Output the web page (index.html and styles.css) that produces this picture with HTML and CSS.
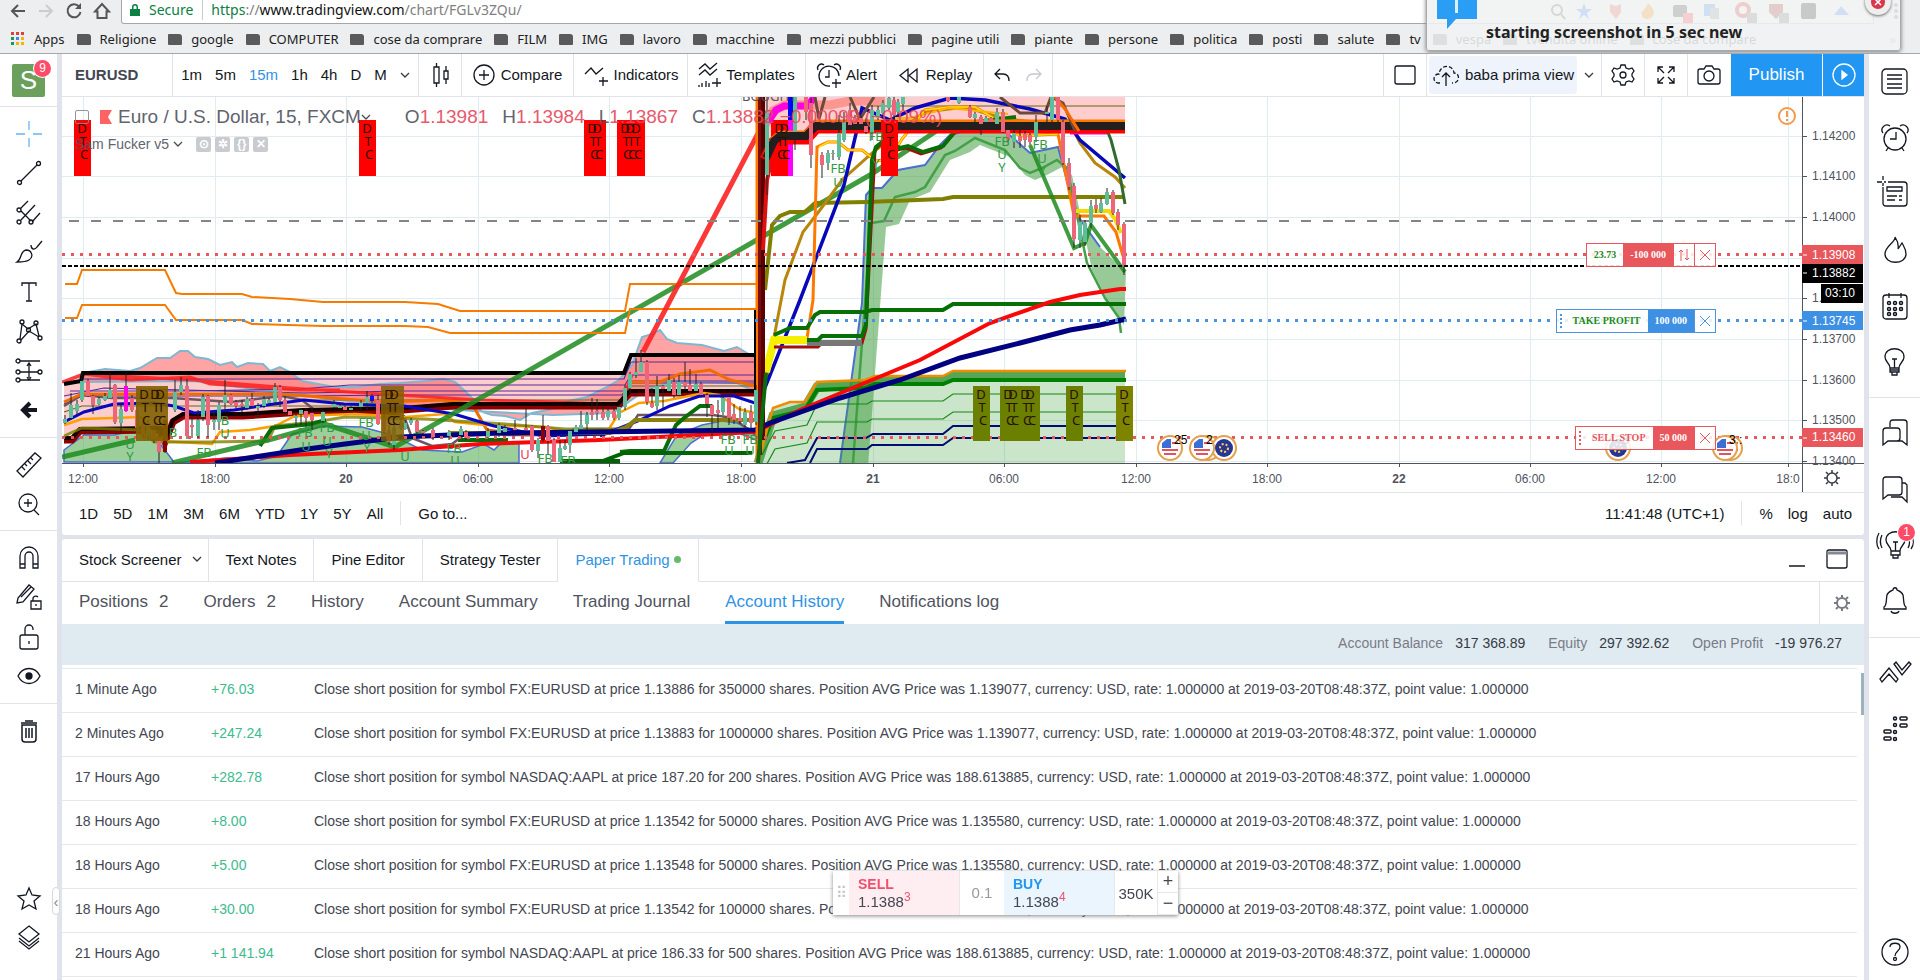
FILE: index.html
```html
<!DOCTYPE html>
<html lang="en">

<head>
    <meta charset="UTF-8" />
    <meta name="viewport" content="width=device-width, initial-scale=1.0" />
    <title>EURUSD 1.13882</title>
    <link rel="stylesheet" href="styles.css">
</head>

<body>
    <header class="browser">
        <div class="address-row">
            <button class="nav-btn" aria-label="Back"><svg width="18" height="18" viewBox="0 0 18 18"><path d="M16 9H3M9 3L3 9l6 6" stroke="#555" stroke-width="2" fill="none" /></svg></button>
            <button class="nav-btn" aria-label="Forward"><svg width="18" height="18" viewBox="0 0 18 18"><path d="M2 9h13M9 3l6 6-6 6" stroke="#ccc" stroke-width="2" fill="none" /></svg></button>
            <button class="nav-btn" aria-label="Reload"><svg width="18" height="18" viewBox="0 0 18 18"><path d="M14 4.500A6.500 6.500 0 1 0 15.500 10" stroke="#555" stroke-width="2" fill="none" /><path d="M16 1v6h-6z" fill="#555" /></svg></button>
            <button class="nav-btn" aria-label="Home"><svg width="18" height="18" viewBox="0 0 18 18"><path d="M9 2L2 9.500h2.500V16h9V9.500H16z" stroke="#555" stroke-width="2" fill="none" /></svg></button>
            <div class="address">
                <svg width="10" height="14" viewBox="0 0 10 14"><path d="M0 6h10v7H0zM2 6V4a3 3 0 0 1 6 0v2" fill="#0b8043" /><path d="M3.500 6V4a1.500 1.500 0 0 1 3 0v2z" fill="#fff" /></svg>
                <span class="secure">Secure</span>
                <span class="url"><span class="secure">https</span>://<b>www.tradingview.com</b>/chart/FGLv3ZQu/</span>
            </div>
            <div class="browser-dots"><i></i><i></i><i></i></div>
        </div>
        <nav class="bookmarks">
            <a href="#"><svg width="14" height="14" viewBox="0 0 14 14"><path d="M0 0h3v3H0zM5 0h3v3H5zM10 0h3v3h-3z" fill="#db4437" /><path d="M0 5h3v3H0z" fill="#0f9d58" /><path d="M5 5h3v3H5z" fill="#4285f4" /><path d="M10 5h3v3h-3zM5 10h3v3H5zM10 10h3v3h-3z" fill="#f4b400" /><path d="M0 10h3v3H0z" fill="#0f9d58" /></svg>Apps</a>
            <a href="#" class="folder">Religione</a>
            <a href="#" class="folder">google</a>
            <a href="#" class="folder">COMPUTER</a>
            <a href="#" class="folder">cose da comprare</a>
            <a href="#" class="folder">FILM</a>
            <a href="#" class="folder">IMG</a>
            <a href="#" class="folder">lavoro</a>
            <a href="#" class="folder">macchine</a>
            <a href="#" class="folder">mezzi pubblici</a>
            <a href="#" class="folder">pagine utili</a>
            <a href="#" class="folder">piante</a>
            <a href="#" class="folder">persone</a>
            <a href="#" class="folder">politica</a>
            <a href="#" class="folder">posti</a>
            <a href="#" class="folder">salute</a>
            <a href="#" class="folder">tv</a>
            <a href="#" class="folder">vespa</a>
            <a href="#" class="folder">tvendita online</a>
            <a href="#" class="folder">cose da compare</a>
            <span class="more">»</span>
        </nav>
        <div class="toast">
            <svg class="toast-icon" width="40" height="32" viewBox="0 0 40 32"><path d="M0 0h40v22H19l-9 10V22H0z" fill="#2a9df4" /><path d="M18 0h3v16h-3z" fill="#d8efff" /></svg>
            <strong>starting screenshot in 5 sec new</strong>
            <svg class="toast-ghosts" width="310" height="28" viewBox="0 0 310 28">
                <g opacity=".18">
                    <circle cx="10" cy="10" r="5" fill="none" stroke="#555" stroke-width="2" /><path d="M14 14l4 5" stroke="#555" stroke-width="2" />
                    <path d="M37 3l2 6h6l-5 4 2 6-5-4-5 4 2-6-5-4h6z" fill="#4285f4" />
                    <path d="M63 4l6 2 5-2v8l-5 7-6-7z" fill="#e55" />
                    <path d="M101 3c6 6 7 9 5 13-3 4-9 4-11 0-2-5 4-6 6-13z" fill="#f80" />
                    <rect x="126" y="5" width="14" height="12" rx="2" fill="#333" /><rect x="136" y="13" width="10" height="10" fill="#f33" />
                    <rect x="157" y="4" width="11" height="12" fill="#4285f4" /><rect x="163" y="8" width="9" height="11" fill="#999" />
                    <circle cx="196" cy="10" r="6" fill="none" stroke="#d22" stroke-width="4" /><rect x="200" y="13" width="10" height="10" fill="#777" />
                    <path d="M222 4h14v8l-7 7-7-7z" fill="#a22" /><rect x="232" y="13" width="10" height="10" fill="#777" />
                    <rect x="254" y="3" width="15" height="16" rx="2" fill="#111" />
                    <path d="M287 15l7-9 8 9z" fill="#4285f4" />
                </g>
            </svg>
            <button class="toast-close" aria-label="Close"><svg width="14" height="14" viewBox="0 0 14 14"><circle cx="7" cy="7" r="7" fill="#d9364c" /><path d="M4 4l6 6M10 4l-6 6" stroke="#fff" stroke-width="1.500" /></svg></button>
        </div>
    </header>

    <div class="app">
        <aside class="left-bar">
            <div class="avatar-box"><div class="avatar">S<span class="badge">9</span></div></div>
            <div class="tools tools-draw">
                <button aria-label="Cross"><svg class="ic blue" viewBox="0 0 28 28"><path d="M14 1v9M14 18v9M1 14h9M18 14h9" /></svg></button>
                <button aria-label="Trend line"><svg class="ic" viewBox="0 0 28 28"><path d="M6 22L22 6" /><circle cx="4.500" cy="23.500" r="2" /><circle cx="23.500" cy="4.500" r="2" /></svg></button>
                <button aria-label="Pitchfork"><svg class="ic" viewBox="0 0 28 28"><path d="M5 10L13 2M6 21L20 6M17 23l8-9M6 12l10 10" /><circle cx="4" cy="11" r="2" /><circle cx="4" cy="23" r="2" /><circle cx="16" cy="23" r="2" /></svg></button>
                <button aria-label="Brush"><svg class="ic" viewBox="0 0 28 28"><path d="M2 24c5-3 3-11 9-12 6 0 8 7 3 10-3 2-7 2-12 2zM16 7c0 5 4 5 6 2l5-6" /></svg></button>
                <button aria-label="Text"><svg class="ic" viewBox="0 0 28 28"><path d="M7 8V5h14v3M14 5v18M11 23h6" /></svg></button>
                <button aria-label="Patterns"><svg class="ic" viewBox="0 0 28 28"><path d="M5 22L7 7l6 5 8-5 3 12M6 23l8-9 10 6" /><circle cx="7" cy="5" r="2" /><circle cx="21" cy="6" r="2" /><circle cx="13.500" cy="13" r="2" /><circle cx="4" cy="24" r="2" /><circle cx="25" cy="21" r="2" /></svg></button>
                <button aria-label="Forecast"><svg class="ic" viewBox="0 0 28 28"><path d="M5 4h20M5 15h18M5 23h20M14 7v14M12 9l2-3 2 3M12 20l2 3 2-3" /><circle cx="3" cy="4" r="2" /><circle cx="3" cy="15" r="2" /><circle cx="25" cy="15" r="2" /><circle cx="3" cy="23" r="2" /></svg></button>
                <button aria-label="Hide drawings list"><svg class="ic" viewBox="0 0 28 28"><path d="M22 14H9M15 7l-7 7 7 7" stroke-width="4" /></svg></button>
            </div>
            <div class="tools tools-measure">
                <button aria-label="Measure"><svg class="ic" viewBox="0 0 28 28"><path d="M2 20L20 2l6 5L8 26zM7 16l3 3M10 13l2 2M13 10l3 3M16 7l2 2" /></svg></button>
                <button aria-label="Zoom in"><svg class="ic" viewBox="0 0 28 28"><circle cx="13" cy="13" r="9" /><path d="M19 20l5 5M9 13h8M13 9v8" /></svg></button>
            </div>
            <div class="tools tools-lock">
                <button aria-label="Magnet"><svg class="ic" viewBox="0 0 28 28"><path d="M5 24V12a9 9 0 0 1 18 0v12h-5V12a4 4 0 0 0-8 0v12zM5 20h5M18 20h5" /></svg></button>
                <button aria-label="Stay in drawing mode"><svg class="ic" viewBox="0 0 28 28"><path d="M2 20l1-5L14 2l5 4L8 19zM6 14L16 4M16 18h10v8H16zM18 18v-3a3 3 0 0 1 5-1M21 21v2" /></svg></button>
                <button aria-label="Lock drawings"><svg class="ic" viewBox="0 0 28 28"><rect x="5" y="12" width="18" height="14" rx="2" /><path d="M10 12V6a4 4 0 0 1 8 0v1M14 18v3" /></svg></button>
                <button aria-label="Hide drawings"><svg class="ic" viewBox="0 0 28 28"><path d="M3 14c5-10 17-10 22 0-5 10-17 10-22 0z" /><circle cx="14" cy="14" r="3" fill="#131722" /></svg></button>
            </div>
            <div class="tools tools-trash">
                <button aria-label="Remove"><svg class="ic" viewBox="0 0 28 28"><path d="M6 6h16M10 4h8M7 8h14v14c0 2-1 3-3 3h-8c-2 0-3-1-3-3zM11 11v10M14 11v10M17 11v10" stroke-width="1.500" /></svg></button>
            </div>
            <div class="tools tools-bottom">
                <button aria-label="Favourites"><svg class="ic" viewBox="0 0 28 28"><path d="M14 4l3 7 8 1-6 5 2 8-7-4-7 4 2-8-6-5 8-1z" /></svg></button>
                <button aria-label="Object tree"><svg class="ic" viewBox="0 0 28 28"><path d="M14 3l10 8-10 8-10-8zM4 15l10 8 10-8M4 18l10 8 10-8" /></svg></button>
            </div>
            <button class="collapse" aria-label="Collapse">‹</button>
        </aside>

        <main class="center">
            <section class="chart-box">
                <div class="top-bar">
                    <button class="cell symbol">EURUSD</button>
                    <div class="cell intervals">
                        <button>1m</button><button>5m</button><button class="active">15m</button><button>1h</button><button>4h</button><button>D</button><button>M</button>
                        <button aria-label="More intervals"><svg class="chev" viewBox="0 0 10 6"><path d="M1 1l4 4 4-4" /></svg></button>
                    </div>
                    <button class="cell w-icon" aria-label="Candles"><svg class="ic" viewBox="0 0 28 28"><path d="M8 6h5v16H8zM10.500 2v4M10.500 22v4M18 10h4v8h-4zM20 5v5M20 18v5" /></svg></button>
                    <button class="cell w-compare"><svg class="ic" viewBox="0 0 28 28"><circle cx="14" cy="14" r="10" /><path d="M14 9v10M9 14h10" /></svg>Compare</button>
                    <button class="cell w-indicators"><svg class="ic" viewBox="0 0 28 28"><path d="M3 13l6-6 5 6 7-6M21 16v9M17 20h9" /></svg>Indicators</button>
                    <button class="cell w-templates"><svg class="ic" viewBox="0 0 28 28"><path d="M4 8l6-5 5 5 7-6M4 14l6-5 5 5 7-6M4 24v2M7 22v4M11 20v6M14 22v4M22 17v9M17 22h9" /></svg>Templates</button>
                    <button class="cell w-alert"><svg class="ic" viewBox="0 0 28 28"><path d="M15 25A10 10 0 1 1 24 15M14 9v7h-4M3 9a4 4 0 0 1 6-5M19 4a4 4 0 0 1 6 5M21 18v9M17 22h9" /></svg>Alert</button>
                    <button class="cell w-replay"><svg class="ic" viewBox="0 0 28 28"><path d="M13 8v13l-8-6.500zM22 8v13l-8-6.500z" /></svg>Replay</button>
                    <div class="cell w-undo">
                        <button aria-label="Undo"><svg class="ic" viewBox="0 0 28 28"><path d="M11 8l-5 5 5 5M6 13h8c4 0 6 2 6 7" /></svg></button>
                        <button aria-label="Redo"><svg class="ic muted" viewBox="0 0 28 28"><path d="M17 8l5 5-5 5M22 13h-8c-4 0-6 2-6 7" /></svg></button>
                    </div>
                    <div class="cell spacer"></div>
                    <button class="cell w-icon" aria-label="Select layout"><svg class="ic" viewBox="0 0 28 28"><rect x="4" y="5" width="20" height="18" rx="2" /></svg></button>
                    <div class="cell w-view">
                        <button class="view-name"><svg class="ic" viewBox="0 0 28 28"><path d="M8 22H6c-6-1-5-9 1-9 1-10 14-10 15-1 6 0 6 9 0 10h-2" stroke-dasharray="4 2" /><path d="M14 25V12M10 16l4-4 4 4" /></svg>baba prima view</button>
                        <button class="view-more" aria-label="Layouts"><svg class="chev" viewBox="0 0 10 6"><path d="M1 1l4 4 4-4" /></svg></button>
                    </div>
                    <button class="cell w-icon" aria-label="Settings"><svg class="ic" viewBox="0 0 28 28"><circle cx="14" cy="14" r="3" /><path d="M12 4h4l1 3 3 1 3-1 2 3-2 3v2l2 3-2 3-3-1-3 1-1 3h-4l-1-3-3-1-3 1-2-3 2-3v-2l-2-3 2-3 3 1 3-1z" /></svg></button>
                    <button class="cell w-icon" aria-label="Fullscreen"><svg class="ic" viewBox="0 0 28 28"><path d="M6 11V6h5M6 6l6 6M17 6h5v5M22 6l-6 6M6 17v5h5M6 22l6-6M22 17v5h-5M22 22l-6-6" /></svg></button>
                    <button class="cell w-icon no-line" aria-label="Snapshot"><svg class="ic" viewBox="0 0 28 28"><path d="M5 8h4l2-3h6l2 3h4c1 0 2 1 2 2v11c0 1-1 2-2 2H5c-1 0-2-1-2-2V10c0-1 1-2 2-2z" /><circle cx="14" cy="15" r="5" /></svg></button>
                    <button class="publish">Publish</button>
                    <button class="play" aria-label="Stream"><svg class="ic white" viewBox="0 0 28 28"><circle cx="14" cy="14" r="11" /><path d="M12 10v8l5-4z" fill="#fff" /></svg></button>
                </div>

                <div class="chart">
                    <div class="legend">
                        <div class="legend-main">
                            <span class="fold"></span>
                            <svg width="12" height="14" viewBox="0 0 12 14"><path d="M0 0h12l-4 7 4 7H0z" fill="#ff5252" /></svg>
                            <span class="legend-name">Euro / U.S. Dollar, 15, FXCM</span>
                            <svg class="chev" viewBox="0 0 10 6"><path d="M1 1l4 4 4-4" /></svg>
                            <span class="ohlc">O<em>1.13981</em></span>
                            <span class="ohlc">H<em>1.13984</em></span>
                            <span class="ohlc">L<em>1.13867</em></span>
                            <span class="ohlc">C<em>1.13882 −0.00099 (−0.09%)</em></span>
                        </div>
                        <div class="legend-study">
                            <span>Sam Fucker v5</span>
                            <svg class="chev" viewBox="0 0 10 6"><path d="M1 1l4 4 4-4" /></svg>
                            <button aria-label="Hide">⊙</button><button aria-label="Format">✲</button><button aria-label="Source">{}</button><button aria-label="Delete">✕</button>
                        </div>
                    </div>
                    <svg class="plot" viewBox="62 97 1802 395" preserveAspectRatio="xMinYMin slice">
                        <defs><clipPath id="area"><rect x="62" y="97" width="1740" height="366" /></clipPath></defs>
                        <g id="grid" stroke="#e1ecf2"></g>
                        <g clip-path="url(#area)" fill="none">
                            <!-- left bands -->
                            <path d="M64 384L83 373H624L631 355H756V393H629L618 407H450L400 413 345 413 300 415H180L168 427H80L64 440z" fill="#fccdcd" />
                            <path d="M83 373l22-4 25 2 10-3 17-10h13l10-7h8l7 6 13 2 12 6 12-3 5 5 11-4 15 1 7 7 10-4 10 5 12 9 16 3 17 3h20l25-3 20-1 25-2 18-2 12 3 10 9 10 10 7 11 10 3 13 1 15 4 12-7 20-4 12-7 23-5 20-10 12-7 13-15 10-28 10-3 8-4 7 9 10 4 25 2 22 6 13-4 10 6 10 6v34l-20-10-60-2-30 8-34 24-60 2-80-4-125-10-155-20-112 1z" fill="rgba(255,90,90,.55)" stroke="#7fb7d3" stroke-width="2" />
                            <path d="M64 450l20-15 30 0 20-4 20 5 20 26H64zM172 463l55-5 30 3 20-5 15-22 30-8 40 1 30 8 30 15 40 2 22-8 10 6 8-8 17 1v20z" fill="rgba(60,160,60,.5)" stroke="#4a6fd0" stroke-width="1.500" />
                            <path d="M660 463l17-28 25-10 20-4 15 2 19 9v8l-25-10-20 0-20 13-18 20z" fill="rgba(60,160,60,.5)" stroke="#4a6fd0" stroke-width="1.500" />
                            <g stroke="#5a2a9a" stroke-width="1.200">
                                <path d="M83 379H624L631 362H756" /><path d="M70 391h120l110-2 50-4h275l6-10h124" /><path d="M64 396l40-8 200 5 96-2h225l6-10h124" /><path d="M64 404l18-8h220l100-1h220l10-12h124" /><path d="M64 412l18-6h540" stroke="#5c6b20" />
                                <path d="M300 400h320l10-14h124" stroke="#5c6b20" />
                            </g>
                            <path d="M64 406l18-11 30 3 60 0 60 4 50-6 20 4 15 12 40 2 35 0 12 2 8 22 20 8 20-2 16-12 40 3 60 0 6-6h55l9-14h75l20 3 24 18" stroke="#6d5560" stroke-width="2.500" />
                            <path d="M64 402l18-8h200l100 8 60-2 30 4 15 26 40 5 40-2 38 2M630 382h30l20-8 30-4 20 10 26 6" stroke="#ef6c00" stroke-width="3" />
                            <path d="M62 382l21-8 110 6 97 8 60 4 130 8 80 2 60 3 12-30M64 382l20-8 46 6 60-3 20 7 30 2 60 4 40 0" stroke="#fd2020" stroke-width="3" stroke-opacity=".85" />
                            <path d="M64 384l17-3 2-8H624l7-18H756" stroke="#000" stroke-width="4" />
                            <path d="M64 440h8l8-9 80-1 5 12 8-20 10-6h60l60-4 100-2 50-4H618l12-13H756" stroke="#8b0000" stroke-width="7" />
                            <path d="M64 438h8l8-9 80-1 5 12 8-20 10-6h60l60-4 100-2 50-4H618l12-13H756" stroke="#150000" stroke-width="4" />
                            <path d="M64 425l18-6 60-2 10 16 10 8 50 3 8-12 30-2 25-4 20-10 60-2 50 3 40-3 10 8 30 3 60 2 30 6h20l14-4 10-16 20-10 25-2 40-8 15 2 20 14 15 4" stroke="#ffa000" stroke-width="2.500" />
                            <path d="M64 436l18-8 60 2 12 12h54l60-1 7-15 40-4 30-5 80 2 80 5 60 5h60l10-10" stroke="#808000" stroke-width="3" opacity=".8" />
                            <path d="M64 422l20-10 30-8 40-1 20 3 20 7 40-3 40-6 30-4 40 4 60 2 50 8 40 12 50 10 60-2 M600 436l40-16 30-14 30-10 34 0 24 8" stroke="#0808c0" stroke-width="3" />
                            <path d="M450 433h160l16-6 10-7h120" stroke="#8a8010" stroke-width="4" />
                            <path d="M260 446l12-18 40-4 14-4M620 452l10-1H664l12-26 8-7 16-12h12M458 440h50" stroke="#0a6b0a" stroke-width="4" />
                            <path d="M62 457L135 440M172 463l100-24 53-15 70 23L755 241l115-66 80-53" stroke="#1f8b1f" stroke-width="5" stroke-opacity=".85" />
                            <path d="M600 462l24-9H752M560 461h60" stroke="#006400" stroke-width="4" />
                            <path d="M65 284h12l5-14h83l11 23 6 1h60l10 3 38 2 33 3h82l33 2 22 7H625l5-27H757M65 318h12l5-13h83l11 15h66l10 4 71 2h82l23 1 22 6H625l5-24H757" stroke="#f57c00" stroke-width="2" />
                            <path d="M643 352L763 124" stroke="#fb2222" stroke-width="5" stroke-opacity=".9" />

                            <!-- top right bands -->
                            <path d="M757 97h368v28H815l-12 12h-25l-8 20-13 40z" fill="#ffcdcd" />
                            <path d="M868 106h257" stroke="#5c6b20" />
                            <path d="M840 463l22-160 4-108 6-7h10l16-18 27-5 15-20 10-10 15-4h40l25 22 28-6 14 53 5 15 23 32 26 25-2 53-14-20-18-35-20-95-10-8-15 8-12 5-10-5-15-18-30-12-10 7-20 8-20 32-20 8-11 24-13 3-18 240z" fill="rgba(50,150,50,.5)" />
                            <path d="M840 463l22-160 4-108 6-7h10l16-18 27-5 15-20 10-10 15-4h40l25 22 28-6 14 53 5 15 23 32" stroke="#4a6fd0" stroke-width="2" />
                            <path d="M853 463l18-240 13-2 11-24 20-5 10-5 20-32 10-4 20-13 30 12 15 18 10 5 12-5 15-8 10 8 20 95 18 35 14 20 2 15" stroke="#43a047" stroke-width="2.500" />
                            <path d="M765 290l7-65 8-9 10-4h15l10-9 52-1 76-3 10-2h172" stroke="#808000" stroke-width="4" />
                            <path d="M762 400l23-120 18-48 17-22 22-30 28-25 30-25 25-18 40-5 40 12 60 6 5-2 10 20 15 20 20 14 10 11" stroke="#b8860b" stroke-width="3" />
                            <path d="M764 390l36-90 44-115 18-77 28 12 25-12 35-10 35 2 45 9 35 10 15 21 45 38" stroke="#0808b8" stroke-width="3.500" />
                            <path d="M1107 130l4 10 8 30 6 34" stroke="#2f6b2f" stroke-width="3" />
                            <path d="M1030 145l44 103 11-5 6-18 34 47" stroke="#1f8b1f" stroke-width="4" stroke-opacity=".85" />
                            <path d="M758 440l7-60 8-42h34L813 300 817 147 828 142 838 142 848 150 862 150 876 161 890 159 902 139 925 110 950 107 975 107 1000 122 1020 136 1058 134 1074 216H1104L1116 232 1123 256" stroke="#ff7800" stroke-width="3" />
                            <path d="M819 147L828 142 838 142 848 150 862 150 876 161 890 159 902 139 925 110 950 107 975 107 1000 122 1020 136 1058 134" stroke="#ffe600" stroke-width="1.500" />
                            <path d="M766 372l8-32h33" stroke="#f5f000" stroke-width="8" /><path d="M1075 211h34l6 8 6 14" stroke="#f5d800" stroke-width="4" />
                            <path d="M774 347h44l4-4h40l4-14 9-179 8-8 15 8 8-2 15 6 20-6 20-22 60-2" stroke="#a01010" stroke-width="3" />
                            <path d="M807 343h55" stroke="#777" stroke-width="6" />
                            <path d="M774 335l16-7h17l8-13 5-3h45l7-2h71l10-6h173M807 340h11l4-4h40l4-11 6-165 4-13 9-7 15 8 8-2 15 6 20-6 18-22 55-7" stroke="#067006" stroke-width="4" />

                            <!-- lower right bands -->
                            <path d="M758 463l15-55 17-6h15l12-20 48-2 10-4h68l10-5h172v92z" fill="rgba(60,160,60,.27)" />
                            <path d="M758 463l15-47 32-9 12-20 48-2 10-4h68l10-5h172" stroke="#379737" stroke-width="9" stroke-opacity=".8" />
                            <path d="M764 440l9-22 32-8 12-20 48-2 10-4h68l10-4h173" stroke="#008000" stroke-width="4" />
                            <path d="M758 463l15-55 17-6h15l12-20 48-2 10-4h68l10-5h173" stroke="#f08c00" stroke-width="2.500" />
                            <path d="M762 455l13-24 32-6 10-21h50l5-3h71l10-7h173M762 473l13-24 32-6 10-21h50l5-3h71l10-7h173" stroke="#158a15" stroke-width="1.200" />
                            <path d="M787 463l18-3 12-22h49l7-4h70l10-8h173M810 463l7-14h50l5-4h71l10-7h173" stroke="#000c72" stroke-width="2" />
                            <path d="M190 462l100-7 110-5 80-6 120-4 155-8 45-22 55-23 65-27 70-37 60-21 30-7 40-6h6" stroke="#f80808" stroke-width="4" />
                            <path d="M215 463l85-13 45-6 55-7 100-4 255-3 15-7 70-25 60-18 60-22 60-15 50-13 30-5 26-6" stroke="#000080" stroke-width="5" />

                            <!-- jump -->
                            <path d="M757 463V97" stroke="#ff7a00" stroke-width="3" /><path d="M760 455V97" stroke="#7a0d0d" stroke-width="4" /><path d="M763 440V97" stroke="#5a0000" stroke-width="4" /><path d="M758 463l8-90" stroke="#0a6b0a" stroke-width="4" />
                            <path d="M755 310v80" stroke="#000" stroke-width="2" />
                            <path d="M763 250l4-70 8-35 10-10" stroke="#e01010" stroke-width="4" />
                            <path d="M771 120h17v56h-17z" fill="#f00" /><path d="M765 125l8-14 12-6h45l20-4h35" stroke="#f44336" stroke-width="9" stroke-opacity=".4" /><path d="M768 122l8-12 8-4h24l6-9M1070 131h37" stroke="#ff00e0" stroke-width="7" />
                            <path d="M788 97h5v30h-5z" fill="#00f" /><path d="M788 120h5v56h-5z" fill="#f0f" />
                            <path d="M766 160l8-17 6-5h26l10-11h309" stroke="#f00" stroke-width="13" /><path d="M766 156l8-17 6-5h26l10-11h309" stroke="#ff7800" stroke-width="7" />
                            <path d="M766 158l8-17 6-5h26l10-10h309" stroke="#231f1f" stroke-width="8" />
                            <path d="M815 97l4 22 6-22M850 97l10 22 14-22M1000 97l20 16 25 0 6-16 12 6 12 28" stroke="#6b4a3a" stroke-width="3" /><path d="M1055 97l10 12 14 22" stroke="#ff6a00" stroke-width="3" />
                            <path d="M895 118h15l38-10 60 6" stroke="#ffb300" stroke-width="2" />

                            <!-- levels -->
                            <path d="M69 221H1802" stroke="#858585" stroke-width="2" stroke-dasharray="10 12" />
                            <path d="M62 254.500H1802" stroke="#e8575c" stroke-width="3" stroke-dasharray="3 6" />
                            <path d="M62 266H1802" stroke="#000" stroke-width="2" stroke-dasharray="4 2" />
                            <path d="M62 320.500H1802" stroke="#4a94df" stroke-width="3" stroke-dasharray="3 6" />
                            <path d="M62 437.500H1802" stroke="#e8575c" stroke-width="3" stroke-dasharray="3 6" />
                        </g>
                        <g id="candles" clip-path="url(#area)"></g>
                        <g id="marks" class="marks" clip-path="url(#area)"></g>
                        <g id="events" class="events"></g>
                        <path d="M62 463.500H1864M1802.500 97V492" stroke="#50535e" fill="none" />
                        <g id="axis" class="axis"></g>
                        <g class="tags">
                            <path d="M1802 245h61v19h-61zM1802 428h61v19h-61z" fill="#e8575c" />
                            <path d="M1802 264h61v19h-61zM1821 284h42v19h-42z" fill="#000" />
                            <path d="M1802 311h61v19h-61z" fill="#3d90e4" />
                            <path d="M1803 255h4M1803 273h4M1803 321h4M1803 438h4" stroke="#fff" />
                            <text x="1812" y="259">1.13908</text><text x="1812" y="277">1.13882</text><text x="1825" y="297">03:10</text><text x="1812" y="325">1.13745</text><text x="1812" y="441">1.13460</text>
                        </g>
                        <circle cx="1787" cy="116" r="8" stroke="#f7994b" stroke-width="2" fill="none" /><path d="M1787 111v6M1787 119v2" stroke="#f7994b" stroke-width="2" />
                        <g stroke="#363a45" fill="none" stroke-width="1.500"><circle cx="1832" cy="478" r="5" /><path d="M1832 470v3M1832 483v3M1824 478h3M1837 478h3M1826 472l2 2M1836 482l2 2M1826 484l2-2M1836 474l2-2" /></g>
                    </svg>
                    <div class="order order-position"><span class="green">23.73</span><span class="qty">-100 000</span><button aria-label="Reverse"><svg width="12" height="12" viewBox="0 0 12 12"><path d="M3 12V1M1 3l2-2 2 2M9 0v11M7 9l2 2 2-2" /></svg></button><button aria-label="Close position"><svg width="12" height="12" viewBox="0 0 12 12"><path d="M1 1l10 10M11 1L1 11" /></svg></button></div>
                    <div class="order order-profit"><i></i><span class="green">TAKE PROFIT</span><span class="qty">100 000</span><button aria-label="Cancel take profit"><svg width="12" height="12" viewBox="0 0 12 12"><path d="M1 1l10 10M11 1L1 11" /></svg></button></div>
                    <div class="order order-stop"><i></i><span>SELL STOP</span><span class="qty">50 000</span><button aria-label="Cancel sell stop"><svg width="12" height="12" viewBox="0 0 12 12"><path d="M1 1l10 10M11 1L1 11" /></svg></button></div>
                </div>

                <div class="range-bar">
                    <button>1D</button><button>5D</button><button>1M</button><button>3M</button><button>6M</button><button>YTD</button><button>1Y</button><button>5Y</button><button>All</button>
                    <span class="sep"></span>
                    <button>Go to...</button>
                    <span class="clock">11:41:48 (UTC+1)</span>
                    <span class="sep"></span>
                    <button>%</button><button>log</button><button>auto</button>
                </div>
            </section>

            <section class="panel">
                <div class="tabs">
                    <button class="tab tab-screener">Stock Screener <svg class="chev" viewBox="0 0 10 6"><path d="M1 1l4 4 4-4" /></svg></button>
                    <button class="tab">Text Notes</button>
                    <button class="tab">Pine Editor</button>
                    <button class="tab">Strategy Tester</button>
                    <button class="tab active">Paper Trading<i class="dot"></i></button>
                    <div class="tabs-end">
                        <button aria-label="Minimize"><svg class="ic" viewBox="0 0 28 28"><path d="M6 21h16" stroke-width="1.500" /></svg></button>
                        <button aria-label="Maximize"><svg class="ic" viewBox="0 0 28 28"><rect x="4" y="5" width="20" height="18" rx="2" /><path d="M4 8h20" stroke="#868993" stroke-width="3" /></svg></button>
                    </div>
                </div>
                <div class="subtabs">
                    <a href="#">Positions<span>2</span></a>
                    <a href="#">Orders<span>2</span></a>
                    <a href="#">History</a>
                    <a href="#">Account Summary</a>
                    <a href="#">Trading Journal</a>
                    <a href="#" class="active">Account History</a>
                    <a href="#">Notifications log</a>
                    <button class="subtabs-gear" aria-label="Trading settings"><svg width="18" height="18" viewBox="0 0 18 18"><circle cx="9" cy="9" r="5" fill="none" stroke="#787b86" stroke-width="2" /><path d="M9 1v3M9 14v3M1 9h3M14 9h3M3 3l2 2M13 13l2 2M3 15l2-2M13 5l2-2" stroke="#787b86" stroke-width="2" /></svg></button>
                </div>
                <div class="summary">
                    <span>Account Balance<b>317 368.89</b></span>
                    <span>Equity<b>297 392.62</b></span>
                    <span>Open Profit<b>-19 976.27</b></span>
                </div>
                <div class="history">
                    <table>
                        <tbody>
                            <tr><td>1 Minute Ago</td><td>+76.03</td><td>Close short position for symbol FX:EURUSD at price 1.13886 for 350000 shares. Position AVG Price was 1.139077, currency: USD, rate: 1.000000 at 2019-03-20T08:48:37Z, point value: 1.000000</td></tr>
                            <tr><td>2 Minutes Ago</td><td>+247.24</td><td>Close short position for symbol FX:EURUSD at price 1.13883 for 1000000 shares. Position AVG Price was 1.139077, currency: USD, rate: 1.000000 at 2019-03-20T08:48:37Z, point value: 1.000000</td></tr>
                            <tr><td>17 Hours Ago</td><td>+282.78</td><td>Close short position for symbol NASDAQ:AAPL at price 187.20 for 200 shares. Position AVG Price was 188.613885, currency: USD, rate: 1.000000 at 2019-03-20T08:48:37Z, point value: 1.000000</td></tr>
                            <tr><td>18 Hours Ago</td><td>+8.00</td><td>Close short position for symbol FX:EURUSD at price 1.13542 for 50000 shares. Position AVG Price was 1.135580, currency: USD, rate: 1.000000 at 2019-03-20T08:48:37Z, point value: 1.000000</td></tr>
                            <tr><td>18 Hours Ago</td><td>+5.00</td><td>Close short position for symbol FX:EURUSD at price 1.13548 for 50000 shares. Position AVG Price was 1.135580, currency: USD, rate: 1.000000 at 2019-03-20T08:48:37Z, point value: 1.000000</td></tr>
                            <tr><td>18 Hours Ago</td><td>+30.00</td><td>Close short position for symbol FX:EURUSD at price 1.13542 for 100000 shares. Position AVG Price was 1.135580, currency: USD, rate: 1.000000 at 2019-03-20T08:48:37Z, point value: 1.000000</td></tr>
                            <tr><td>21 Hours Ago</td><td>+1 141.94</td><td>Close short position for symbol NASDAQ:AAPL at price 186.33 for 500 shares. Position AVG Price was 188.613885, currency: USD, rate: 1.000000 at 2019-03-20T08:48:37Z, point value: 1.000000</td></tr>
                        </tbody>
                    </table>
                    <div class="scroll-thumb"></div>
                </div>
            </section>
        </main>

        <aside class="right-bar">
            <div class="widgets">
                <button aria-label="Watchlist"><svg class="ic" viewBox="0 0 28 28"><rect x="1" y="1" width="25" height="25" rx="4" /><path d="M6 7h15M6 11h15M6 16h15M6 20h15" /></svg></button>
                <button aria-label="Alerts"><svg class="ic" viewBox="0 0 28 28"><circle cx="14" cy="15" r="11" /><path d="M15 8v7H9M2 9a5 5 0 0 1 7-7M19 2a5 5 0 0 1 7 7M7 24l-2 3M21 24l2 3" /></svg></button>
                <button aria-label="Data window"><svg class="ic" viewBox="0 0 28 28"><path d="M7 2h16c2 0 3 1 3 3v18c0 2-1 3-3 3H5c-2 0-3-1-3-3V7M6 7h15v4H6zM6 16h10M18 16h3M6 20h8M18 20h3M-4 2h5M3 2h2M2-4v4M2 3v3" /></svg></button>
                <button aria-label="Hotlists"><svg class="ic" viewBox="0 0 28 28"><path d="M14 1c1 5-10 9-10 17 0 11 21 11 21 0 0-5-2-7-4-11l-4 6c1-5-1-9-3-12z" /></svg></button>
                <button aria-label="Calendar"><svg class="ic" viewBox="0 0 28 28"><rect x="2" y="3" width="24" height="24" rx="3" /><path d="M8 1v5M20 1v5" /><g stroke-width="1.500"><circle cx="8" cy="11" r="1.500" /><circle cx="14" cy="11" r="1.500" /><circle cx="20" cy="11" r="1.500" /><circle cx="8" cy="17" r="1.500" /><circle cx="14" cy="17" r="1.500" /><circle cx="20" cy="17" r="1.500" /><circle cx="8" cy="22" r="1.500" /><circle cx="14" cy="22" r="1.500" /></g></svg></button>
                <button aria-label="My ideas"><svg class="ic" viewBox="0 0 28 28"><path d="M9 20c0-5-5-6-5-11 0-11 19-11 19 0 0 5-5 6-5 11zM9 20v4h9v-4M9 22h9M11 24v3h5v-3M11 11h5M13.500 11v9" /></svg></button>
            </div>
            <div class="widgets">
                <button aria-label="Public chats"><svg class="ic" viewBox="0 0 28 28"><path d="M2 12c0-2 1-3 3-3h11c2 0 3 1 3 3v7c0 2-1 3-3 3H7l-5 4zM9 8V4c0-2 1-3 3-3h11c2 0 3 1 3 3v22l-5-4h-6" /></svg></button>
                <button aria-label="Private chats"><svg class="ic" viewBox="0 0 28 28"><path d="M2 5c0-2 1-3 3-3h13c2 0 3 1 3 3v12c0 2-1 3-3 3H7l-5 4zM21 8h3l2 2v17l-5-5H10" /></svg></button>
                <button aria-label="Ideas stream"><svg class="ic" viewBox="0 0 28 28"><path d="M10 20c0-5-5-6-5-11 0-11 19-11 19 0 0 5-5 6-5 11zM10 20v4h9v-4M12 24v3h5v-3M12 11h5M14.500 11v9M1 4c-2 4-2 9 0 13M-2 2c-3 5-3 12 0 16M27 6c2 3 2 8 0 11M30 3c3 5 3 11 0 15" /></svg><span class="badge">1</span></button>
                <button aria-label="Notifications"><svg class="ic" viewBox="0 0 28 28"><path d="M3 20c3-1 2-8 3-12 1-3 4-4 6-5 0-3 4-3 4 0 2 1 5 2 6 5 1 4 0 11 3 12v2H3zM10 24c1 3 7 3 8 0" /></svg></button>
            </div>
            <div class="widgets">
                <button aria-label="Order panel"><svg class="ic" viewBox="0 0 28 28"><path d="M-1 20l9-11 9 11-2 3-7-8-7 8zM13 5l8 11 9-11-2-2-7 8-6-8z" /></svg></button>
                <button aria-label="Depth of market"><svg class="ic" viewBox="0 0 28 28"><g stroke-width="1.500"><rect x="3" y="15" width="7" height="3" rx="1" /><rect x="3" y="22" width="7" height="3" rx="1" /><rect x="19" y="2" width="7" height="3" rx="1" /><rect x="19" y="9" width="7" height="3" rx="1" /><circle cx="14" cy="3.500" r="1.500" /><circle cx="14" cy="10" r="1.500" /><circle cx="14" cy="17" r="1.500" /><circle cx="14" cy="24" r="1.500" /></g></svg></button>
            </div>
            <button class="help" aria-label="Help"><svg class="ic" viewBox="0 0 28 28"><circle cx="14" cy="14" r="13" /><path d="M9 9c0-5 10-5 10 0 0 4-5 4-5 9" /><circle cx="14" cy="21" r="1.500" /></svg></button>
        </aside>
    </div>

    <div class="trade">
        <span class="grip">⠿</span>
        <button class="sell"><b>SELL</b><span>1.1388<sup>3</sup></span></button>
        <span class="spread">0.1</span>
        <button class="buy"><b>BUY</b><span>1.1388<sup>4</sup></span></button>
        <input type="text" value="350K" aria-label="Quantity">
        <div class="steps"><button aria-label="More">+</button><button aria-label="Less">−</button></div>
    </div>

    <script>
        const draw = ( id, html ) => ( document.getElementById( id ).innerHTML = html );

        // time and price scales
        let times = [ [ 83, "12:00" ], [ 215, "18:00" ], [ 346, "20", 1 ], [ 478, "06:00" ], [ 609, "12:00" ], [ 741, "18:00" ], [ 873, "21", 1 ], [ 1004, "06:00" ], [ 1136, "12:00" ], [ 1267, "18:00" ], [ 1399, "22", 1 ], [ 1530, "06:00" ], [ 1661, "12:00" ], [ 1788, "18:0" ] ];
        let prices = [ [ 136, "1.14200" ], [ 176, "1.14100" ], [ 217, "1.14000" ], [ 258, "1.13900" ], [ 298, "1.13800" ], [ 339, "1.13700" ], [ 380, "1.13600" ], [ 420, "1.13500" ], [ 461, "1.13400" ] ];
        draw( "grid", times.map( t => `<path d="M${t[ 0 ]}.5 97V463" />` ).join( "" ) + prices.map( p => `<path d="M62 ${p[ 0 ]}.5H1802" />` ).join( "" ) );
        draw( "axis", times.map( t => `<path d="M${t[ 0 ]}.5 463v4" /><text x="${t[ 0 ]}" y="483" text-anchor="middle" ${t[ 2 ] ? 'class="day"' : ""}>${t[ 1 ]}</text>` ).join( "" )
            + prices.filter( p => p[ 0 ] != 258 ).map( p => `<path d="M1802 ${p[ 0 ]}.5h5" /><text x="1812" y="${p[ 0 ] + 4}">${p[ 1 ]}</text>` ).join( "" ) );

        // x, high, low, body top, body bottom, colour
        let colours = { g: "#5ebd9a", r: "#ee6478", m: "#ff00e0", k: "#8b0000", b: "#1010ff" };
        let candles = `65 415 424 419 423 g,71 393 420 405 418 g,77 400 415 404 411 g,82 372 402 381 400 g,88 379 397 381 396 r,93 395 414 396 405 r,99 397 405 399 404 g,105 393 401 396 400 g,110 373 398 390 398 g,115 384 424 385 422 r,121 403 433 409 423 g,126 373 412 386 411 m,132 395 412 398 410 r,137 404 430 410 428 r,143 420 437 424 435 r,148 420 440 425 436 g,154 425 443 430 439 r,159 435 463 438 452 r,165 417 453 420 452 k,175 380 412 392 410 g,181 377 395 385 392 g,187 379 439 386 436 r,192 415 438 425 427 r,198 410 438 420 436 g,203 394 421 397 417 g,208 395 437 396 425 r,214 412 430 420 422 g,219 402 430 405 422 g,225 380 412 395 403 g,231 394 405 395 404 r,236 400 408 402 406 r,242 400 412 404 406 r,247 397 410 399 408 g,252 393 408 399 406 r,258 403 417 406 408 g,264 396 408 399 406 g,269 398 404 400 403 g,275 383 405 387 402 g,280 385 407 387 400 r,285 396 415 400 412 r,290 410 416 411 415 r,296 413 426 416 418 g,301 408 425 410 414 g,306 408 427 411 418 r,312 408 430 413 420 r,323 410 423 412 421 g,334 400 408 404 407 g,340 404 410 406 408 g,345 405 412 407 410 r,351 406 412 408 410 g,361 400 412 403 407 g,367 391 410 397 403 g,372 394 403 396 401 b,378 395 425 400 424 r,384 410 433 418 431 r,389 425 445 430 442 r,394 422 450 428 445 g,401 418 430 422 428 g,405 420 430 423 429 g,411 418 425 420 423 g,417 420 435 421 432 r,423 430 434 431 433 r,433 428 440 430 437 r,449 430 440 432 436 g,461 426 437 429 435 g,466 430 440 432 438 r,488 428 438 431 437 g,499 423 437 425 433 g,505 425 433 428 432 g,515 420 432 428 430 r,526 408 430 428 430 r,532 425 452 426 450 r,538 438 458 440 451 g,543 415 442 426 440 k,548 425 455 426 441 r,554 438 462 440 462 r,560 440 462 448 462 g,565 440 450 446 449 g,570 430 453 431 445 g,576 425 433 427 432 g,581 411 430 425 429 g,587 412 430 415 424 g,592 398 420 412 415 r,597 399 420 411 413 r,603 405 420 412 418 r,608 408 420 411 417 g,614 405 420 411 418 r,619 405 420 407 418 g,625 385 410 388 407 g,630 372 393 374 388 g,636 358 378 372 375 g,641 350 372 362 372 g,647 360 405 362 402 r,652 388 408 403 407 r,657 376 410 386 406 g,663 385 408 386 389 r,669 374 392 380 391 g,674 378 398 382 395 r,679 375 396 382 395 g,685 362 390 382 386 r,690 369 393 385 391 r,696 374 393 384 391 g,701 382 398 384 395 r,707 393 417 395 404 r,712 404 436 405 415 r,718 400 428 410 413 r,723 395 415 398 412 g,729 392 425 397 418 r,734 404 424 414 420 r,740 406 424 418 421 r,745 408 427 412 425 g,751 405 428 412 423 r,756 385 425 390 422 g,767 97 195 110 175 g,795 97 150 97 132 g,806 97 120 97 112 r,811 98 168 103 155 r,822 152 178 155 165 r,828 150 170 153 163 g,833 150 160 153 154 g,839 115 160 133 157 g,844 112 142 122 140 g,850 103 126 110 125 r,855 115 127 118 124 r,861 115 126 118 124 r,866 118 134 126 132 r,872 105 140 110 132 g,878 106 120 110 118 g,883 100 115 103 113 g,889 97 110 98 108 g,894 97 130 100 115 r,898 99 115 102 112 g,903 97 110 97 104 g,948 97 102 97 101 r,959 97 104 97 103 g,970 105 118 107 117 r,975 112 122 114 118 g,981 115 135 117 124 r,986 116 124 118 122 g,991 117 123 118 122 r,997 108 125 112 124 g,1003 109 133 112 132 r,1008 126 142 130 140 r,1014 130 148 133 142 g,1020 127 148 136 141 r,1025 131 147 134 140 r,1030 133 145 135 142 r,1036 115 142 122 137 g,1047 106 125 112 114 g,1052 97 122 97 120 g,1058 97 125 97 120 r,1063 120 165 122 163 r,1069 158 190 163 187 r,1074 183 248 186 239 r,1080 215 248 222 240 g,1085 220 246 223 242 g,1091 200 228 206 223 g,1096 199 213 205 209 r,1101 198 213 203 212 g,1107 188 205 192 204 g,1113 190 215 192 213 r,1118 209 230 212 225 r,1124 222 275 224 265 r`;
        draw( "candles", candles.split( "," ).map( c => {
            let [ x, hi, lo, top, bottom, k ] = c.split( " " );
            return `<path d="M${x} ${hi}V${lo}" stroke="#222" /><rect x="${x - 2}" y="${top}" width="4" height="${bottom - top}" fill="${colours[ k ]}" />`;
        } ).join( "" ) );

        // DTC flags: x, y, width, colour, letter columns
        let flags = [ [ 74, 120, 17, "#f00", [ 0 ] ], [ 359, 120, 17, "#f00", [ 0 ] ], [ 584, 120, 22, "#f00", [ 0, 5 ] ], [ 617, 120, 28, "#f00", [ 0, 5, 11 ] ], [ 771, 120, 17, "none", [ 0, 5 ] ], [ 881, 120, 17, "#f00", [ 0 ] ],
        [ 136, 386, 32, "rgba(128,96,0,.9)", [ 0, 11, 16 ] ], [ 381, 386, 23, "rgba(128,96,0,.85)", [ 0, 5 ] ], [ 973, 386, 17, "#6b8000", [ 0 ] ], [ 1000, 386, 40, "#6b8000", [ 0, 5, 17, 22 ] ], [ 1066, 386, 17, "#6b8000", [ 0 ] ], [ 1116, 386, 17, "#7d8400", [ 0 ] ] ];
        let words = [ [ 130, 449, "U" ], [ 130, 461, "Y" ], [ 173, 437, "B" ], [ 225, 425, "B" ], [ 225, 438, "U" ], [ 204, 457, "FB" ], [ 305, 437, "FB" ], [ 306, 451, "U" ], [ 327, 432, "FB" ], [ 327, 446, "U" ], [ 329, 458, "Y" ], [ 366, 427, "FB" ], [ 366, 440, "U" ], [ 367, 452, "Y" ], [ 405, 461, "U" ], [ 454, 453, "FB" ], [ 455, 465, "U" ], [ 545, 463, "FB" ], [ 568, 465, "FB" ], [ 728, 444, "FB" ], [ 729, 455, "U" ], [ 750, 444, "FB" ], [ 750, 455, "U" ], [ 838, 173, "FB" ], [ 838, 187, "U" ], [ 876, 141, "FB" ], [ 876, 168, "Y" ], [ 1002, 146, "FB" ], [ 1002, 159, "U" ], [ 1002, 172, "Y" ], [ 1040, 149, "FB" ], [ 1042, 163, "U" ], [ 1042, 176, "Y" ] ];
        draw( "marks", flags.map( f => `<rect x="${f[ 0 ]}" y="${f[ 1 ]}" width="${f[ 2 ]}" height="${f[ 1 ] > 200 ? 55 : 56}" fill="${f[ 3 ]}" />` + f[ 4 ].map( o =>
            [ ..."DTC" ].map( ( l, i ) => `<text x="${f[ 0 ] + o + 8 + i}" y="${f[ 1 ] + 13 + i * 13}">${l}</text>` ).join( "" ) ).join( "" ) ).join( "" )
            + words.map( w => `<text class="word" x="${w[ 0 ]}" y="${w[ 1 ]}">${w[ 2 ]}</text>` ).join( "" )
            + `<text class="word red" x="525" y="459">U</text><text class="bought" x="742" y="101">BOUGHT</text>` );

        // economic events
        let events = [ [ 1170, "us", "25" ], [ 1208, "us", "" ], [ 1224, "eu", "" ], [ 1202, "us", "2" ], [ 1618, "eu", "3" ], [ 1730, "us", "" ], [ 1725, "us", "3 :" ] ];
        draw( "events", events.map( e => `<circle cx="${e[ 0 ]}" cy="448" r="12" fill="#fff" stroke="#e5a04b" stroke-width="2" /><circle cx="${e[ 0 ]}" cy="448" r="9" fill="${e[ 1 ] == "us" ? "#fff" : "#283593"}" />`
            + ( e[ 1 ] == "us" ? `<path d="M${e[ 0 ] - 8} 448v-5l5-4h4v9z" fill="#3c6fd6" /><path d="M${e[ 0 ] + 2} 443h6M${e[ 0 ] - 8} 450h16M${e[ 0 ] - 6} 454h12" stroke="#e0525c" stroke-width="2" />` : `<circle cx="${e[ 0 ]}" cy="448" r="4" fill="none" stroke="#ffd54f" stroke-dasharray="2 2" stroke-width="2" />` )
            + ( e[ 2 ] ? `<text x="${e[ 0 ] + 4}" y="444">${e[ 2 ]}</text>` : "" ) ).join( "" ) );
    </script>
</body>

</html>
```

FILE: styles.css
```css
*,
::after,
::before {
    box-sizing: border-box;
    padding: 0;
    margin: 0;
}

html {
    height: 100%;
    overflow: hidden;
}

body {
    height: 100%;
    display: flex;
    flex-direction: column;
    overflow: hidden;
    background-color: #e0e3eb;
    color: #131722;
    font-family: "Liberation Sans", Arial, sans-serif;
    font-size: 15px;
}

button {
    background: none;
    border: none;
    color: inherit;
    font: inherit;
    display: flex;
    align-items: center;
    justify-content: center;
    white-space: nowrap;
}

a {
    color: inherit;
    text-decoration: none;
}

.ic {
    width: 28px;
    height: 28px;
    flex: none;
    fill: none;
    stroke: #131722;
    stroke-width: 1.3;
    overflow: visible;
}

.ic.blue {
    stroke: #64b5f6;
}

.ic.muted {
    stroke: #c5c8d0;
}

.ic.white {
    stroke: white;
}

.chev {
    width: 10px;
    height: 6px;
    flex: none;
    fill: none;
    stroke: #363a45;
    stroke-width: 1.3;
}

/* browser */
.browser {
    position: relative;
    flex: none;
    height: 54px;
    overflow: hidden;
    background-color: #eceef0;
    border-bottom: 1px solid #a5a7a9;
    font-family: "Noto Sans", "Open Sans", sans-serif;
    font-size: 13px;
}

.address-row {
    display: flex;
    height: 24px;
    padding: 0 0 3px 9px;
    gap: 10px;
}

.nav-btn {
    width: 18px;
    flex: none;
}

.address {
    flex: 1;
    height: 24px;
    display: flex;
    align-items: center;
    gap: 9px;
    margin-right: 10px;
    padding: 0 8px 4px 8px;
    background-color: white;
    border: 1px solid #a5a7a9;
    border-top: none;
    border-radius: 0 0 0 3px;
    font-size: 14px;
    color: #808080;
}

.address b {
    color: #111;
    font-weight: normal;
}

.secure {
    color: #0b8043;
}

.url {
    padding-left: 8px;
    border-left: 1px solid #ccc;
    line-height: 20px;
}

.browser-dots {
    width: 26px;
    padding-top: 3px;
}

.browser-dots i {
    display: block;
    width: 4px;
    height: 4px;
    margin-bottom: 2px;
    border-radius: 50%;
    background-color: #444;
}

.bookmarks {
    display: flex;
    align-items: center;
    height: 30px;
    padding-left: 11px;
    gap: 12px;
    white-space: nowrap;
    color: #222;
}

.bookmarks a {
    display: flex;
    align-items: center;
    gap: 9px;
}

.folder::before {
    content: "";
    width: 14px;
    height: 11px;
    background-color: #5a5a5a;
    border-radius: 1px 3px 1px 1px;
}

.more {
    margin-left: auto;
    padding-right: 24px;
    color: #888;
}

.toast {
    position: absolute;
    top: -10px;
    right: 19px;
    width: 475px;
    height: 61px;
    background-color: rgba(240, 242, 243, .88);
    border: 1px solid #aaa;
    border-radius: 3px;
    box-shadow: 0 1px 4px #777;
}

.toast-icon {
    position: absolute;
    left: 10px;
    top: 6px;
}

.toast strong {
    position: absolute;
    left: 59px;
    top: 29px;
    font-size: 16px;
    line-height: 24px;
    color: #222;
}

.toast-ghosts {
    position: absolute;
    left: 120px;
    top: 9px;
}

.toast-close {
    position: absolute;
    right: 9px;
    top: -2px;
    width: 26px;
    height: 26px;
    border-radius: 50%;
    background-color: #eee;
    box-shadow: 0 1px 3px #666;
}

/* page */
.app {
    flex: 1;
    min-height: 0;
    display: grid;
    grid-template-columns: 57px 1fr 51px;
    grid-template-rows: minmax(0, 1fr);
    gap: 5px;
}

.left-bar,
.right-bar {
    position: relative;
    display: flex;
    flex-direction: column;
    background-color: white;
}

.avatar-box {
    height: 53px;
    padding: 10px 12px;
    border-bottom: 1px solid #e0e3eb;
}

.avatar {
    position: relative;
    width: 33px;
    height: 33px;
    border-radius: 2px;
    background-color: #6a9f5c;
    color: white;
    font-size: 26px;
    line-height: 32px;
    text-align: center;
}

.badge {
    position: absolute;
    top: -4px;
    right: -6px;
    width: 17px;
    height: 17px;
    border-radius: 50%;
    background-color: #ff4a68;
    box-shadow: 0 0 0 1px white;
    color: white;
    font-size: 12px;
    line-height: 17px;
    text-align: center;
}

.tools {
    display: flex;
    flex-direction: column;
    padding: 7px 0;
    border-bottom: 1px solid #e0e3eb;
}

.tools button {
    flex: 1;
    min-height: 39px;
}

.tools-draw {
    height: 331px;
}

.tools-measure {
    height: 93px;
}

.tools-lock {
    height: 173px;
}

.tools-trash {
    border: none;
}

.tools-bottom {
    margin-top: auto;
    padding-bottom: 24px;
    border: none;
}

.collapse {
    position: absolute;
    right: -3px;
    bottom: 65px;
    width: 8px;
    height: 28px;
    border: 1px solid #d5d8e0;
    border-radius: 4px;
    background-color: white;
    color: #888;
}

.widgets {
    padding: 0 0 7px;
    border-bottom: 1px solid #e0e3eb;
}

.widgets+.widgets {
    padding: 7px 0 8px;
}

.widgets:nth-child(3) {
    border: none;
}

.widgets button {
    position: relative;
    width: 100%;
    height: 56px;
}

.widgets .badge {
    top: 7px;
    right: 5px;
}

.help {
    margin-top: auto;
    height: 56px;
}

/* chart */
.center {
    display: flex;
    flex-direction: column;
    gap: 4px;
    min-width: 0;
    min-height: 0;
}

.chart-box {
    background-color: white;
    border-radius: 0 0 3px 3px;
}

.top-bar {
    display: flex;
    height: 43px;
    border-bottom: 1px solid #e0e3eb;
}

.cell {
    display: flex;
    align-items: center;
    justify-content: center;
    flex: none;
    gap: 3px;
    padding-bottom: 1px;
    border-right: 1px solid #e0e3eb;
}

.symbol {
    width: 111px;
    justify-content: flex-start;
    padding-left: 13px;
    color: #434651;
    font-weight: bold;
}

.intervals {
    width: 246px;
    gap: 13px;
}

.active {
    color: #2f93e4;
}

.w-icon {
    width: 43px;
}

.w-compare {
    width: 112px;
    padding-right: 3px;
}

.w-indicators {
    width: 114px;
}

.w-templates {
    width: 118px;
    padding-right: 3px;
}

.w-alert {
    width: 81px;
}

.w-replay {
    width: 97px;
    padding-right: 3px;
}

.w-undo {
    width: 69px;
    gap: 2px;
}

.spacer {
    flex: 1;
}

.w-view {
    width: 175px;
    gap: 0;
}

.view-name {
    flex: 1;
    height: 38px;
    margin-left: 2px;
    gap: 5px;
    border-radius: 3px;
    background-color: #eff3fb;
}

.view-more {
    width: 24px;
}

.no-line {
    border-right-color: transparent;
}

.publish,
.play {
    width: 91px;
    height: 42px;
    background-color: #2196f3;
    color: white;
    font-size: 17px;
}

.play {
    width: 42px;
    border-left: 1px solid white;
}

.chart {
    position: relative;
    overflow: hidden;
    height: 395px;
}

.plot {
    position: relative;
    display: block;
    width: 100%;
    height: 395px;
    pointer-events: none;
}

.legend {
    position: absolute;
    z-index: 1;
    left: 13px;
    top: 8px;
    opacity: .9;
    color: #50535e;
    white-space: nowrap;
}

.legend-main {
    display: flex;
    align-items: center;
    font-size: 19px;
    line-height: 24px;
}

.fold {
    width: 14px;
    height: 14px;
    margin-right: 11px;
    border: 1px solid #868993;
    border-radius: 2px;
}

.legend-name {
    margin-left: 6px;
}

.legend-main .chev {
    margin-right: 34px;
}

.ohlc {
    margin-right: 14px;
}

.ohlc em {
    color: #e5485d;
    font-style: normal;
}

.legend-study {
    display: flex;
    align-items: center;
    gap: 4px;
    margin-top: 7px;
    font-size: 14px;
    line-height: 16px;
}

.legend-study .chev {
    margin-right: 9px;
}

.legend-study button {
    width: 15px;
    height: 15px;
    border-radius: 2px;
    background-color: #c4c6cc;
    color: white;
    font-size: 12px;
    font-weight: bold;
}

.axis text,
.tags text {
    font-size: 12px;
    fill: #50535e;
}

.axis .day {
    font-weight: bold;
}

.axis path {
    stroke: #50535e;
}

.tags text {
    fill: white;
}

.marks text {
    font-family: "Noto Sans", "Open Sans", sans-serif;
    font-size: 13px;
    text-anchor: middle;
    fill: #2a1000;
}

.marks .word {
    fill: #2f9a40;
}

.marks .red {
    fill: #f23645;
}

.marks .bought {
    text-anchor: start;
    fill: #555;
}

.events text {
    font-size: 12px;
}

.order {
    position: absolute;
    right: 148px;
    display: flex;
    height: 24px;
    border: 1px solid #e8575c;
    background-color: rgba(255, 255, 255, .85);
    color: #e8575c;
    font-family: "Liberation Serif", serif;
    font-size: 10px;
    font-weight: bold;
    line-height: 22px;
}

.order span {
    padding: 0 7px;
    white-space: nowrap;
}

.order .green {
    color: #228b22;
}

.order .qty {
    background-color: #e8575c;
    color: white;
}

.order button {
    width: 21px;
    border-left: 1px solid #e8575c;
}

.order svg {
    fill: none;
    stroke: currentColor;
}

.order i {
    width: 3px;
    margin: 4px 3px;
    border-left: 2px dotted currentColor;
}

.order-position {
    top: 146px;
}

.order-profit {
    top: 212px;
    border-color: #4a94df;
    color: #4a94df;
}

.order-profit .qty {
    background-color: #3d90e4;
}

.order-profit button {
    border-color: #4a94df;
}

.order-stop {
    top: 329px;
}

.range-bar {
    display: flex;
    align-items: center;
    height: 43px;
    gap: 15px;
    padding: 0 12px 2px 17px;
    border-top: 1px solid #e0e3eb;
}

.sep {
    width: 1px;
    height: 24px;
    margin: 0 2px;
    background-color: #e0e3eb;
}

.clock {
    margin-left: auto;
}

/* bottom panel */
.panel {
    flex: 1;
    min-height: 0;
    display: flex;
    flex-direction: column;
    background-color: white;
    border-radius: 3px 3px 0 0;
}

.tabs {
    display: flex;
    flex: none;
    height: 43px;
}

.tab {
    padding: 0 17px 2px;
    border-right: 1px solid #e0e3eb;
    border-bottom: 1px solid #e0e3eb;
}

.tab-screener {
    gap: 10px;
    padding-right: 6px;
}

.tab.active {
    border-bottom-color: transparent;
}

.dot {
    width: 7px;
    height: 7px;
    margin-left: 4px;
    border-radius: 50%;
    background-color: #66bb6a;
}

.tabs-end {
    flex: 1;
    display: flex;
    justify-content: flex-end;
    gap: 12px;
    padding: 0 13px 2px 0;
    border-bottom: 1px solid #e0e3eb;
}

.subtabs {
    display: flex;
    flex: none;
    height: 42px;
    gap: 35px;
    padding-left: 17px;
    color: #50535e;
    font-size: 17px;
    line-height: 40px;
}

.subtabs span {
    margin-left: 11px;
}

.subtabs .active {
    color: #2f93e4;
    border-bottom: 3px solid #2f93e4;
}

.subtabs-gear {
    width: 45px;
    margin-left: auto;
    border-left: 1px solid #e0e3eb;
}

.summary {
    flex: none;
    display: flex;
    justify-content: flex-end;
    height: 41px;
    gap: 23px;
    padding-right: 22px;
    background-color: #e0ebf1;
    color: #787b86;
    font-size: 14px;
    line-height: 39px;
}

.summary b {
    margin-left: 12px;
    color: #363a45;
    font-weight: normal;
}

.history {
    position: relative;
    padding: 3px 7px 0 0;
    overflow: hidden;
}

table {
    width: 100%;
    border-collapse: collapse;
    border-top: 1px solid #e6e8ea;
    color: #434651;
    font-size: 14px;
}

td {
    height: 44px;
    padding-bottom: 3px;
    border-bottom: 1px solid #e6e8ea;
    white-space: nowrap;
}

td:first-child {
    width: 149px;
    padding-left: 13px;
}

td:nth-child(2) {
    width: 103px;
    color: #3dbb8f;
}

.scroll-thumb {
    position: absolute;
    top: 8px;
    right: 0;
    width: 3px;
    height: 42px;
    background-color: #9db2bd;
}

.trade {
    position: fixed;
    left: 833px;
    bottom: 65px;
    display: flex;
    height: 44px;
    background-color: white;
    box-shadow: 0 1px 4px #888;
    color: #434651;
    font-size: 15px;
}

.grip {
    width: 16px;
    line-height: 44px;
    text-align: center;
    color: #c0c3cc;
}

.sell,
.buy {
    width: 111px;
    flex-direction: column;
    align-items: flex-start;
    padding-left: 9px;
    background-color: #ffeef1;
    border-right: 1px solid #e6e8ea;
    line-height: 17px;
}

.buy {
    background-color: #eaf5fe;
}

.sell b {
    font-size: 14px;
    color: #f0506e;
}

.buy b {
    font-size: 14px;
    color: #2196f3;
}

.sell sup,
.buy sup {
    font-size: 12px;
    line-height: 0;
    color: #f0506e;
}

.spread {
    width: 44px;
    line-height: 44px;
    text-align: center;
    color: #999;
}

.trade input {
    width: 42px;
    border: none;
    background: none;
    color: inherit;
    font: inherit;
    text-align: center;
}

.steps {
    width: 21px;
    border-left: 1px solid #e6e8ea;
}

.steps button {
    width: 100%;
    height: 22px;
    font-size: 18px;
    border-bottom: 1px solid #e6e8ea;
}
```
